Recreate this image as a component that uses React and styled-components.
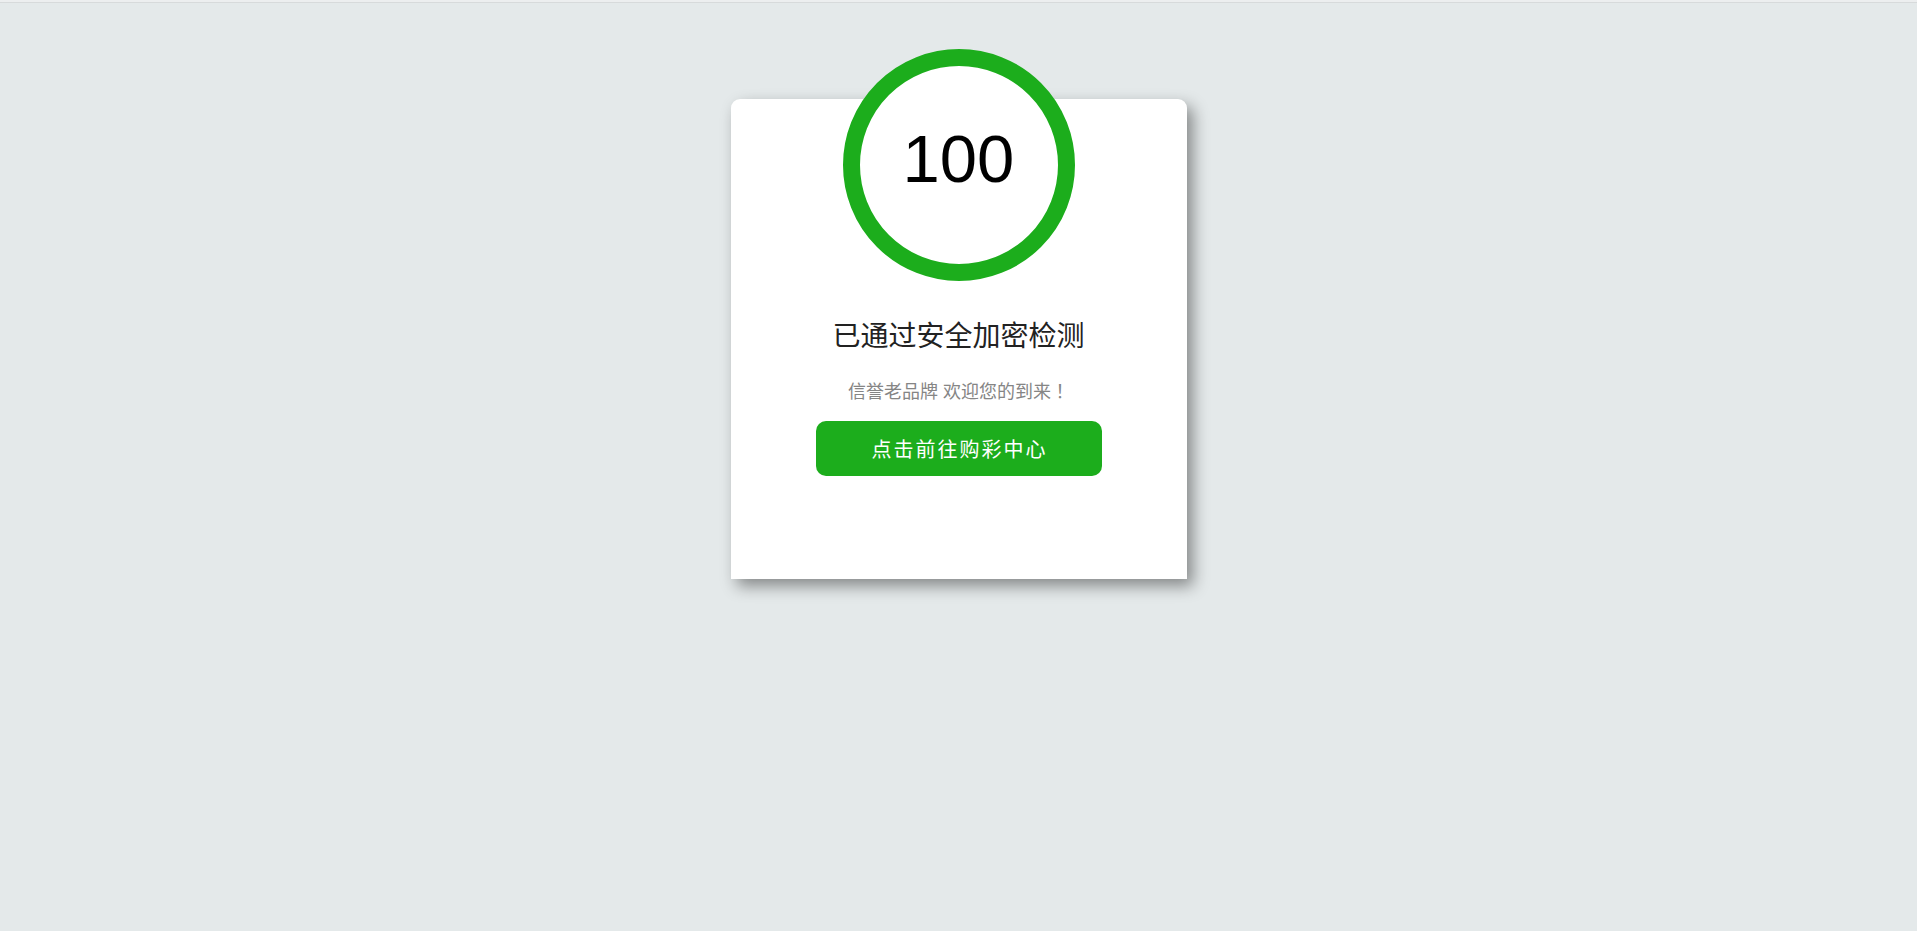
import React from "react";
import styled, { createGlobalStyle } from "styled-components";

const GlobalStyle = createGlobalStyle`
  html, body {
    margin: 0;
    padding: 0;
    height: 100%;
  }
  body {
    background: #e4e9ea;
    font-family: "Liberation Sans", "Noto Sans CJK SC", sans-serif;
  }
`;

const Page = styled.div`
  min-height: 931px;
  box-sizing: border-box;
  border-top: 2px solid #eceeef;
  overflow: hidden;
  &::before {
    content: "";
    display: block;
    height: 1px;
    background: #d7dadb;
  }
`;

const Card = styled.div`
  width: 456px;
  height: 480px;
  margin: 96px auto 0;
  background: #fff;
  border-radius: 9px 9px 0 0;
  box-shadow: 6px 7px 16px rgba(0, 0, 0, 0.42);
  display: flex;
  flex-direction: column;
  align-items: center;
  text-align: center;
`;

const Score = styled.div`
  width: 232px;
  height: 232px;
  margin-top: -50px;
  box-sizing: border-box;
  border: 17px solid #1cad1c;
  border-radius: 50%;
  background: #fff;
  padding-bottom: 14px;
  display: flex;
  align-items: center;
  justify-content: center;
  font-family: "Liberation Sans", Arial, sans-serif;
  font-size: 67px;
  line-height: 1;
  color: #000;
`;

const Title = styled.h2`
  margin: 36px 0 0;
  font-weight: normal;
  font-size: 28px;
  line-height: 40px;
  color: #222;
  font-family: "Liberation Sans", "Noto Sans CJK SC", sans-serif;
`;

const Subtitle = styled.p`
  margin: 22px 0 0;
  height: 26px;
  font-size: 18px;
  line-height: 26px;
  color: #858585;
`;

const Bang = styled.span`
  font-family: "Noto Sans CJK TC", sans-serif;
  line-height: 1;
`;

const GoButton = styled.button`
  margin-top: 16px;
  width: 286px;
  height: 55px;
  border: none;
  border-radius: 10px;
  background: #1cad1c;
  color: #fff;
  font-family: "Liberation Sans", "Noto Sans CJK SC", sans-serif;
  font-size: 20px;
  letter-spacing: 2px;
  padding: 0 0 0 2px;
  cursor: pointer;
`;

export default function App() {
  return (
    <Page>
      <GlobalStyle />
      <Card>
        <Score>100</Score>
        <Title>已通过安全加密检测</Title>
        <Subtitle>
          信誉老品牌 欢迎您的到来<Bang>！</Bang>
        </Subtitle>
        <GoButton>点击前往购彩中心</GoButton>
      </Card>
    </Page>
  );
}
